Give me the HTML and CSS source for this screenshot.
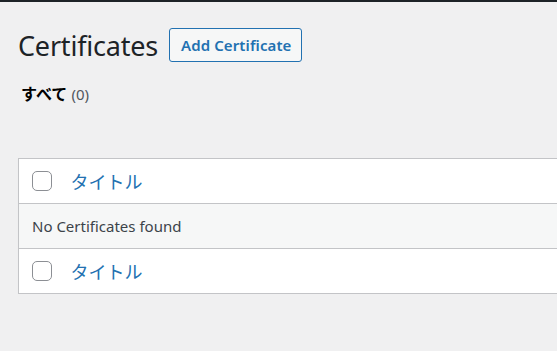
FILE: index.html
```html
<!DOCTYPE html>
<html lang="ja">
<head>
  <meta charset="UTF-8">
  <title>Certificates</title>
  <link rel="stylesheet" href="styles.css">
</head>
<body>
  <div class="admin-bar"></div>
  <div class="wrap">
    <div class="title-row">
      <h1>Certificates</h1>
      <a href="#" class="page-title-action">Add Certificate</a>
    </div>

    <ul class="subsubsub">
      <li><a href="#" class="current">すべて <span class="count">(0)</span></a></li>
    </ul>

    <table class="list-table">
      <thead>
        <tr>
          <td class="check-column"><input type="checkbox"></td>
          <th class="column-title"><a href="#">タイトル</a></th>
        </tr>
      </thead>
      <tbody>
        <tr class="no-items">
          <td colspan="2">No Certificates found</td>
        </tr>
      </tbody>
      <tfoot>
        <tr>
          <td class="check-column"><input type="checkbox"></td>
          <th class="column-title"><a href="#">タイトル</a></th>
        </tr>
      </tfoot>
    </table>
  </div>
</body>
</html>
```

FILE: styles.css
```css
body {
  margin: 0;
  background-color: #f0f0f1;
  color: #3c434a;
  font-family: "Noto Sans", "Noto Sans CJK JP", sans-serif;
  font-size: 16px;
}
.admin-bar {
  height: 2px;
  background-color: #1d2327;
}
.wrap {
  padding-left: 18px;
}
.title-row {
  display: flex;
  align-items: center;
  margin-top: 25px;
  height: 36px;
}
h1 {
  margin: 0 11px 0 0;
  font-size: 27px;
  font-weight: 400;
  color: #1d2327;
  letter-spacing: -0.2px;
}
.page-title-action {
  display: inline-block;
  box-sizing: border-box;
  height: 34px;
  line-height: 32px;
  padding: 0 10px 0 11px;
  border: 1px solid #2271b1;
  border-radius: 3px;
  background-color: #f6f7f7;
  color: #2271b1;
  font-size: 15px;
  font-weight: 600;
  letter-spacing: 0.1px;
  text-decoration: none;
}
.subsubsub {
  list-style: none;
  margin: 18px 0 0 3px;
  padding: 0;
  font-size: 16px;
  line-height: 26px;
}
.subsubsub a {
  color: #000;
  text-decoration: none;
}
.subsubsub .current {
  font-weight: 700;
}
.subsubsub .count {
  font-weight: 400;
  color: #50575e;
  font-size: 15px;
}
.list-table {
  margin-top: 51px;
  width: 100%;
  border-collapse: collapse;
  border: 1px solid #c3c4c7;
  border-right: none;
  background-color: #fff;
  box-shadow: 0 1px 1px rgba(0, 0, 0, 0.04);
}
.list-table td, .list-table th {
  padding: 0;
  text-align: left;
  font-weight: 400;
}
.list-table thead tr {
  height: 45px;
  border-bottom: 1px solid #c3c4c7;
}
.list-table tfoot tr {
  height: 45px;
  border-top: 1px solid #c3c4c7;
}
.check-column {
  width: 52px;
  padding-left: 13px !important;
  box-sizing: border-box;
}
.check-column input {
  appearance: none;
  display: block;
  margin: 0;
  width: 20px;
  height: 20px;
  border: 1px solid #8c8f94;
  border-radius: 5px;
  background-color: #fff;
}
.column-title a {
  color: #2271b1;
  text-decoration: none;
  font-size: 18px;
}
.no-items td {
  height: 44px;
  padding-left: 13px;
  background-color: #f6f7f7;
  font-size: 15px;
  color: #3c434a;
}
```
